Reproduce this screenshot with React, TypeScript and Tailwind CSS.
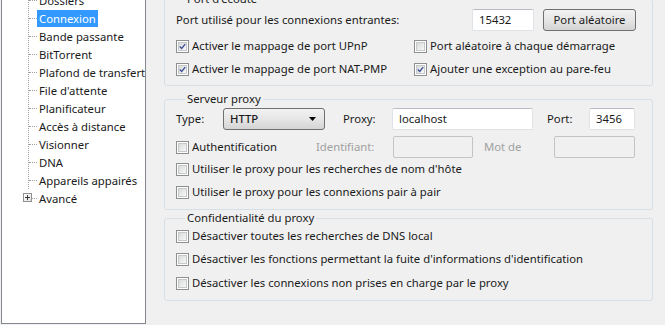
import React from "react";

const FONT = "font-['Noto_Sans','Open_Sans',sans-serif]";

const treeItems = [
  "Dossiers",
  "Connexion",
  "Bande passante",
  "BitTorrent",
  "Plafond de transfert",
  "File d'attente",
  "Planificateur",
  "Accès à distance",
  "Visionner",
  "DNA",
  "Appareils appairés",
  "Avancé",
];

const Check: React.FC<{ checked?: boolean }> = ({ checked }) => (
  <span className="relative w-[13px] h-[13px] shrink-0 border border-[#8e8f8f] bg-white flex items-center justify-center">
    <span className="w-[9px] h-[9px] border border-[#c6c9cc] bg-gradient-to-br from-[#dadada] to-[#f8f8f8] flex items-center justify-center">
      {checked && (
        <svg width="9" height="9" viewBox="0 0 9 9" className="-mt-[1px]">
          <path d="M1 4.5 L3.5 7 L8 1.5" fill="none" stroke="#3e539a" strokeWidth="1.8" />
        </svg>
      )}
    </span>
  </span>
);

const CheckRow: React.FC<{ checked?: boolean; label: string; className?: string }> = ({ checked, label, className }) => (
  <div className={`flex items-center gap-[3px] ${className ?? ""}`}>
    <Check checked={checked} />
    <span className="whitespace-nowrap">{label}</span>
  </div>
);

const TextBox: React.FC<{ value?: string; disabled?: boolean; className?: string }> = ({ value, disabled, className }) => (
  <div
    className={`h-[22px] flex items-center px-[6px] rounded-[2px] border ${
      disabled ? "border-[#c4c4c4] bg-[#f0f0f0]" : "border-[#dfe3e8] border-t-[#b9bcc2] bg-white"
    } ${className ?? ""}`}
  >
    {value}
  </div>
);

const Group: React.FC<{ title: string; className?: string; children: React.ReactNode }> = ({ title, className, children }) => (
  <fieldset className={`border border-[#d5dfe5] rounded-[3px] pl-[11px] pr-[16px] ${className ?? ""}`}>
    <legend className="ml-[9px] px-[2px] leading-[16px]">{title}</legend>
    {children}
  </fieldset>
);

export default function App() {
  return (
    <div className={`w-[665px] h-[325px] overflow-hidden flex bg-[#f0f0f0] text-[11.3px] text-[#1a1a1a] ${FONT}`}>
      {/* tree */}
      <div className="w-[145px] h-[324px] shrink-0 bg-white border-l border-r border-b border-[#828790] ml-[1px] overflow-hidden">
        <div className="relative -mt-[9px] pl-[21px]">
          <div className="absolute left-[26px] top-0 h-[198px] border-l border-dotted border-[#a0a0a0]" />
          {treeItems.map((item, i) => (
            <div key={item} className="relative h-[18px] flex items-center">
              <span className="w-[14px] h-[18px] shrink-0 relative flex items-center">
                <span className="ml-[6px] w-[8px] border-t border-dotted border-[#a0a0a0]" />
                {i === treeItems.length - 1 && (
                  <span className="absolute left-0 top-[4px] w-[9px] h-[9px] border border-[#919191] bg-gradient-to-br from-white to-[#e0e0e0] flex items-center justify-center">
                    <span className="relative w-[5px] h-[5px] flex items-center justify-center">
                      <span className="absolute w-[5px] h-[1px] bg-[#3a3a3a]" />
                      <span className="absolute w-[1px] h-[5px] bg-[#3a3a3a]" />
                    </span>
                  </span>
                )}
              </span>
              <span
                className={`px-[2px] leading-[17px] whitespace-nowrap ${
                  item === "Connexion" ? "bg-[#3399ff] text-white" : ""
                }`}
              >
                {item}
              </span>
            </div>
          ))}
        </div>
      </div>

      {/* settings */}
      <div className="flex-1 pl-[18px] pr-[12px] flex flex-col">
        <Group title="Port d'écoute" className="-mt-[9px] pb-[4px]">
          <div className="flex items-center h-[22px] mt-[2px]">
            <span className="whitespace-nowrap">Port utilisé pour les connexions entrantes:</span>
            <TextBox value="15432" className="ml-auto w-[62px]" />
            <button className="ml-[9px] w-[93px] h-[22px] rounded-[3px] border border-[#707070] bg-gradient-to-b from-[#f2f2f2] via-[#e6e6e6] to-[#d4d4d4]">
              Port aléatoire
            </button>
          </div>
          <div className="flex mt-[4px] h-[23px] items-center">
            <CheckRow checked label="Activer le mappage de port UPnP" className="w-[238px]" />
            <CheckRow label="Port aléatoire à chaque démarrage" />
          </div>
          <div className="flex h-[23px] items-center">
            <CheckRow checked label="Activer le mappage de port NAT-PMP" className="w-[238px]" />
            <CheckRow checked label="Ajouter une exception au pare-feu" />
          </div>
        </Group>

        <Group title="Serveur proxy" className="mt-[5px] pb-[5px]">
          <div className="flex items-center h-[22px] mt-[1px]">
            <span className="w-[47px]">Type:</span>
            <div className="w-[102px] h-[22px] rounded-[3px] border border-[#707070] bg-gradient-to-b from-[#f2f2f2] via-[#e6e6e6] to-[#d4d4d4] flex items-center pl-[6px] pr-[8px]">
              <span className="flex-1 font-medium">HTTP</span>
              <svg width="7" height="4" viewBox="0 0 7 4">
                <path d="M0 0 H7 L3.5 4 Z" fill="#000" />
              </svg>
            </div>
            <span className="ml-[18px] w-[49px]">Proxy:</span>
            <TextBox value="localhost" className="w-[141px]" />
            <span className="ml-[14px] w-[42px]">Port:</span>
            <TextBox value="3456" className="w-[46px]" />
          </div>
          <div className="flex items-center h-[22px] mt-[6px]">
            <CheckRow label="Authentification" className="w-[140px]" />
            <span className="w-[77px] text-[#a0a0a0]">Identifiant:</span>
            <TextBox disabled className="w-[80px]" />
            <span className="ml-[11px] w-[70px] text-[#a0a0a0]">Mot de</span>
            <TextBox disabled className="w-[81px]" />
          </div>
          <div className="flex h-[23px] items-center">
            <CheckRow label="Utiliser le proxy pour les recherches de nom d'hôte" />
          </div>
          <div className="flex h-[23px] items-center">
            <CheckRow label="Utiliser le proxy pour les connexions pair à pair" />
          </div>
        </Group>

        <Group title="Confidentialité du proxy" className="mt-[0px] pb-[5px]">
          <div className="flex h-[22px] items-center -mt-[1px]">
            <CheckRow label="Désactiver toutes les recherches de DNS local" />
          </div>
          <div className="flex h-[24px] items-center">
            <CheckRow label="Désactiver les fonctions permettant la fuite d'informations d'identification" />
          </div>
          <div className="flex h-[24px] items-center">
            <CheckRow label="Désactiver les connexions non prises en charge par le proxy" />
          </div>
        </Group>
      </div>
    </div>
  );
}
